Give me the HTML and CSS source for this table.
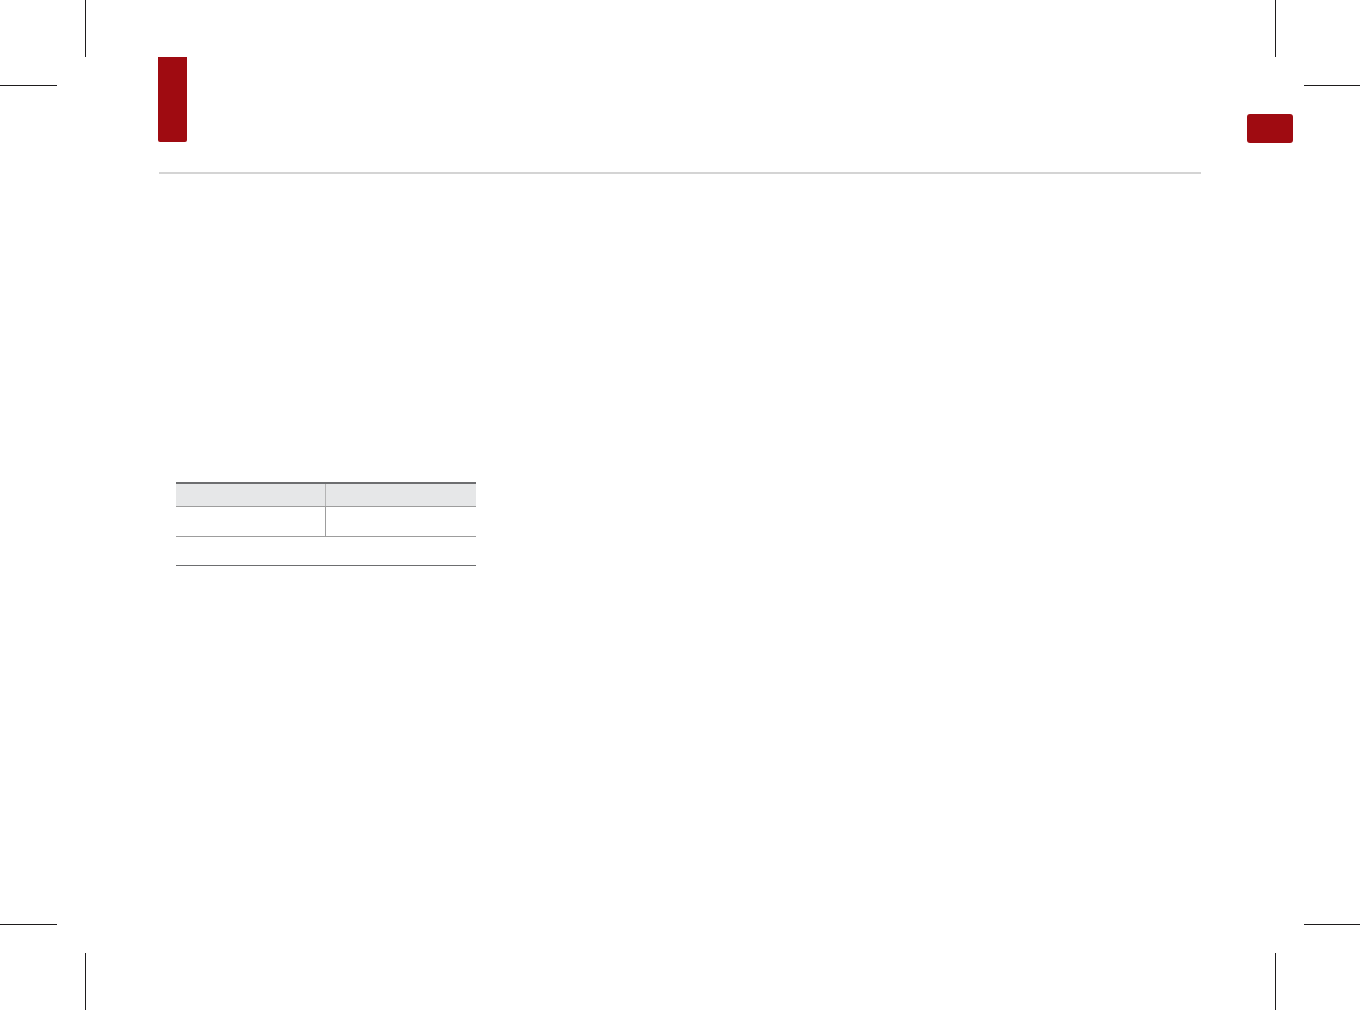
FILE: index.html
```html
<!DOCTYPE html>
<html lang="en">
<head>
    <meta charset="UTF-8">
    <meta name="viewport" content="width=device-width, initial-scale=1.0">
    <title>Page</title>
    <link rel="stylesheet" href="styles.css">
</head>
<body>
    <div class="page">
        <!-- crop marks -->
        <span class="mark v tl"></span>
        <span class="mark h tl"></span>
        <span class="mark v tr"></span>
        <span class="mark h tr"></span>
        <span class="mark v bl"></span>
        <span class="mark h bl"></span>
        <span class="mark v br"></span>
        <span class="mark h br"></span>

        <div class="content">
            <header class="page-head">
                <div class="chapter-tab"></div>
                <div class="section-badge"></div>
            </header>
            <div class="rule"></div>

            <div class="spec">
                <div class="spec-row head">
                    <div class="cell"></div>
                    <div class="cell"></div>
                </div>
                <div class="spec-row first">
                    <div class="cell"></div>
                    <div class="cell"></div>
                </div>
                <div class="spec-row wide">
                    <div class="cell"></div>
                </div>
            </div>
        </div>
    </div>
</body>
</html>
```

FILE: styles.css
```css
body {
    margin: 0;
    padding: 0;
    background-color: white;
    font-family: "Liberation Sans", Arial, sans-serif;
}
.page {
    position: relative;
    width: 1360px;
    height: 1010px;
    overflow: hidden;
}
.mark {
    position: absolute;
    background-color: #1e1c1d;
}
.mark.v {
    width: 1px;
    height: 57px;
}
.mark.h {
    width: 57px;
    height: 1px;
}
.mark.v.tl { left: 85px; top: 0; }
.mark.h.tl { left: 0; top: 85px; }
.mark.v.tr { left: 1275px; top: 0; }
.mark.h.tr { left: 1304px; top: 85px; }
.mark.v.bl { left: 85px; top: 953px; }
.mark.h.bl { left: 0; top: 924px; }
.mark.v.br { left: 1275px; top: 953px; }
.mark.h.br { left: 1304px; top: 924px; }
.content {
    padding-left: 159px;
}
.page-head {
    width: 1134px;
    display: flex;
    justify-content: space-between;
    align-items: flex-start;
}
.chapter-tab {
    width: 29px;
    height: 85px;
    margin-top: 57px;
    margin-left: -1px;
    background-color: #9f0b11;
    border-radius: 0 0 2px 2px;
}
.section-badge {
    width: 46px;
    height: 29px;
    margin-top: 114px;
    background-color: #9f0b11;
    border-radius: 3px;
}
.rule {
    width: 1042px;
    height: 2px;
    margin-top: 29px;
    background-color: #d4d4d4;
}
.spec {
    width: 300px;
    margin: 308px 0 0 17px;
    border-top: 2px solid #6d6e70;
    border-bottom: 1px solid #6d6e70;
}
.spec-row {
    display: grid;
    grid-template-columns: 150px 1fr;
    border-bottom: 1px solid #9d9d9d;
}
.spec-row .cell:first-child {
    border-right: 1px solid #9d9d9d;
}
.spec-row.head .cell {
    height: 22px;
    background-color: #e6e7e8;
}
.spec-row.head .cell:first-child {
    border-right-color: #b4b4b4;
}
.spec-row.first .cell {
    height: 29px;
}
.spec-row.wide {
    grid-template-columns: 1fr;
    border-bottom: none;
}
.spec-row.wide .cell {
    height: 28px;
    border-right: none;
}
```
